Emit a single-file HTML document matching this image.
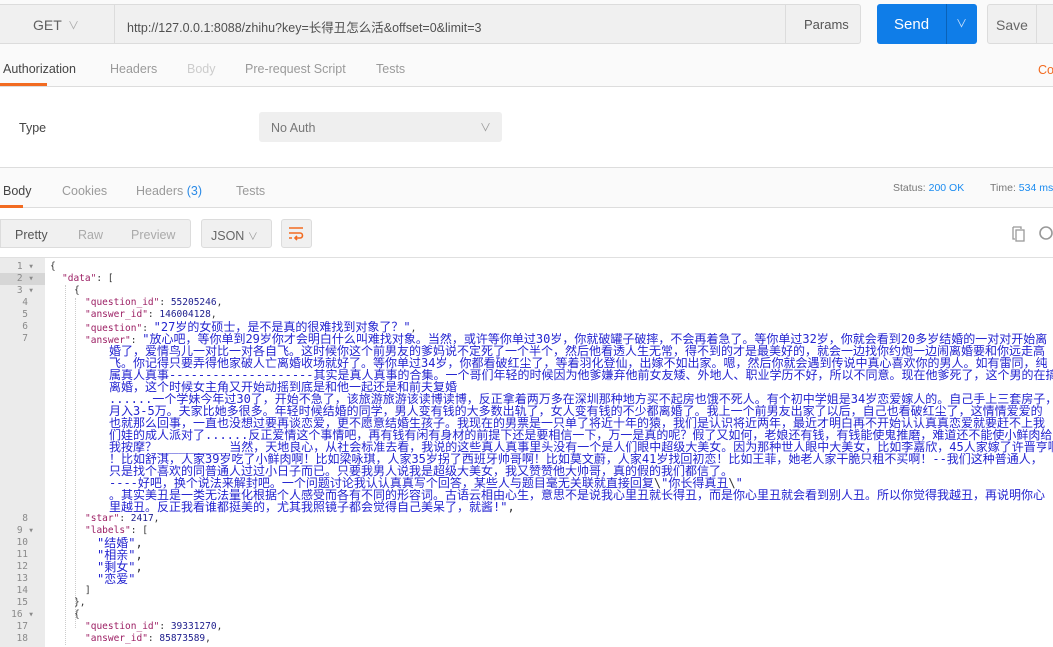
<!DOCTYPE html>
<html><head><meta charset="utf-8"><style>
*{margin:0;padding:0;box-sizing:border-box}
body{width:1053px;height:646px;overflow:hidden;background:#fff;font-family:"Liberation Sans","Noto Sans CJK SC",sans-serif;position:relative;font-size:12px;color:#505050}
.a{position:absolute}
.top{left:0;top:0;width:1053px;height:50px;background:#fafafa}
.box{background:#f0f0f0;border:1px solid #dcdcdc;border-radius:3px}
.tabs{left:0;top:50px;width:1053px;height:37px;background:#fafafa;border-bottom:1px solid #ddd}
.t{position:absolute;font-size:12.5px;color:#9a9a9a}
.code{left:0;top:257px;width:1053px;height:389px;border-top:1px solid #e0e0e0}
.gut{left:0;top:0;width:45px;height:389px;background:#ebebeb}
.ln{position:absolute;width:34px;text-align:right;font:9.5px/12px "DejaVu Sans Mono",monospace;color:#8a8a8a;left:0}
.row{position:absolute;left:50px;height:13px;white-space:nowrap;font:9.5px/12px "DejaVu Sans Mono","Noto Sans CJK SC",monospace;color:#333;width:1003px;overflow:hidden}
.k{color:#9c1f64}.s{color:#2424d0}.n{color:#1c1c8c}
.cj{font-size:12px;line-height:12px;font-family:"DejaVu Sans Mono","Noto Sans CJK SC",monospace}
</style></head><body>
<div class="a top"></div>
<div class="a box" style="left:-3px;top:4px;width:118px;height:40px;border-radius:0"></div>
<div class="a" style="left:33px;top:17px;font-size:14px;color:#606060">GET</div>
<div class="a" style="left:68px;top:17px;font-size:11px;color:#aaa">∨</div>
<div class="a box" style="left:114px;top:4px;width:747px;height:40px;border-radius:0 3px 3px 0"></div>
<div class="a" style="left:785px;top:4px;width:1px;height:40px;background:#dcdcdc"></div>
<div class="a" style="left:127px;top:17px;font-size:12.5px;color:#505050;font-family:'Liberation Sans','Noto Sans CJK SC',sans-serif">http://127.0.0.1:8088/zhihu?key=长得丑怎么活&amp;offset=0&amp;limit=3</div>
<div class="a" style="left:804px;top:17px;font-size:13px;color:#555">Params</div>
<div class="a" style="left:877px;top:4px;width:100px;height:40px;background:#0f7de8;border-radius:3px"></div>
<div class="a" style="left:946px;top:4px;width:1px;height:40px;background:#0a62b8"></div>
<div class="a" style="left:894px;top:16px;font-size:15px;color:#fff">Send</div>
<div class="a" style="left:956px;top:15px;font-size:11px;color:#cfe3fb">∨</div>
<div class="a box" style="left:987px;top:4px;width:80px;height:40px"></div>
<div class="a" style="left:1036px;top:4px;width:1px;height:40px;background:#dcdcdc"></div>
<div class="a" style="left:996px;top:17px;font-size:14px;color:#666">Save</div>
<div class="a tabs"></div>
<div class="t" style="left:3px;top:62px;color:#444">Authorization</div>
<div class="a" style="left:0;top:83px;width:47px;height:3px;background:#f26b21"></div>
<div class="t" style="left:110px;top:62px">Headers</div>
<div class="t" style="left:187px;top:62px;color:#ccc">Body</div>
<div class="t" style="left:245px;top:62px">Pre-request Script</div>
<div class="t" style="left:376px;top:62px">Tests</div>
<div class="t" style="left:1038px;top:63px;color:#f26b21">Co</div>
<div class="t" style="left:19px;top:121px;color:#444">Type</div>
<div class="a" style="left:259px;top:112px;width:243px;height:30px;background:#efefef;border-radius:3px"></div>
<div class="t" style="left:271px;top:121px;color:#777">No Auth</div>
<div class="a" style="left:480px;top:119px;font-size:11px;color:#999">∨</div>
<div class="a" style="left:0;top:167px;width:1053px;height:41px;background:#fafafa;border-top:1px solid #ddd;border-bottom:1px solid #ddd"></div>
<div class="t" style="left:3px;top:184px;color:#444">Body</div>
<div class="a" style="left:0;top:205px;width:23px;height:3px;background:#f26b21"></div>
<div class="t" style="left:62px;top:184px">Cookies</div>
<div class="t" style="left:136px;top:184px">Headers <span style="color:#2a8ae6">(3)</span></div>
<div class="t" style="left:236px;top:184px">Tests</div>
<div class="a" style="left:893px;top:182px;font-size:10.5px;color:#777">Status: <span style="color:#1a8bf0">200 OK</span></div>
<div class="a" style="left:990px;top:182px;font-size:10.5px;color:#777;white-space:nowrap">Time: <span style="color:#1a8bf0">534 ms</span></div>
<div class="a box" style="left:0;top:219px;width:191px;height:29px;border-radius:0 3px 3px 0"></div>
<div class="t" style="left:15px;top:228px;color:#555">Pretty</div>
<div class="t" style="left:78px;top:228px;color:#aaa">Raw</div>
<div class="t" style="left:131px;top:228px;color:#aaa">Preview</div>
<div class="a box" style="left:201px;top:219px;width:71px;height:29px"></div>
<div class="t" style="left:211px;top:228px;color:#666">JSON <span style="font-size:10px;color:#999">∨</span></div>
<div class="a box" style="left:281px;top:219px;width:31px;height:29px"></div>
<svg class="a" style="left:288px;top:226px" width="16" height="16" viewBox="0 0 16 16" fill="none" stroke="#f26b21" stroke-width="1.6"><path d="M1 2h14M1 7h11a2.5 2.5 0 0 1 0 5H7M9 10l-2 2 2 2M1 12h3"/></svg>
<svg class="a" style="left:1010px;top:225px" width="18" height="18" viewBox="0 0 18 18" fill="none" stroke="#999" stroke-width="1.3"><path d="M3 2h8v2M3 2v12h2"/><rect x="6" y="5" width="8" height="11"/></svg>
<svg class="a" style="left:1037px;top:224px" width="16" height="18" viewBox="0 0 16 18" fill="none" stroke="#999" stroke-width="1.6"><circle cx="9" cy="9" r="6"/></svg>
<div class="a code">
<div class="a gut"></div>
<div class="a" style="left:0;top:15px;width:45px;height:12px;background:#d6d6d6"></div>
<div class="a" style="left:65px;top:27px;width:1px;height:360px;border-left:1px dotted #ccc"></div>
<div class="a" style="left:75px;top:40px;width:1px;height:330px;border-left:1px dotted #ccc"></div>
<div class="ln" style="top:3px">1 ▾</div><div class="ln" style="top:15px">2 ▾</div><div class="ln" style="top:27px">3 ▾</div>
<div class="ln" style="top:39px;width:28px">4</div><div class="ln" style="top:51px;width:28px">5</div><div class="ln" style="top:63px;width:28px">6</div><div class="ln" style="top:75px;width:28px">7</div>
<div class="ln" style="top:255px;width:28px">8</div><div class="ln" style="top:267px">9 ▾</div><div class="ln" style="top:279px;width:28px">10</div><div class="ln" style="top:291px;width:28px">11</div><div class="ln" style="top:303px;width:28px">12</div><div class="ln" style="top:315px;width:28px">13</div><div class="ln" style="top:327px;width:28px">14</div><div class="ln" style="top:339px;width:28px">15</div><div class="ln" style="top:351px">16 ▾</div><div class="ln" style="top:363px;width:28px">17</div><div class="ln" style="top:375px;width:28px">18</div>
<div class="row" style="top:3px">{</div>
<div class="row" style="top:15px;left:62px"><span class="k">"data"</span>: [</div>
<div class="row" style="top:27px;left:74px">{</div>
<div class="row" style="top:39px;left:85px"><span class="k">"question_id"</span>: <span class="n">55205246</span>,</div>
<div class="row" style="top:51px;left:85px"><span class="k">"answer_id"</span>: <span class="n">146004128</span>,</div>
<div class="row" style="top:63px;left:85px"><span class="k">"question"</span>: <span class="s cj">"27岁的女硕士，是不是真的很难找到对象了？"</span>,</div>
<div class="row" style="top:75px;left:85px"><span class="k">"answer"</span>: <span class="s cj">"放心吧，等你单到29岁你才会明白什么叫难找对象。当然，或许等你单过30岁，你就破罐子破摔，不会再着急了。等你单过32岁，你就会看到20多岁结婚的一对对开始离</span></div>
<div class="row s cj" style="top:87px;left:109px">婚了，爱情鸟儿一对比一对各自飞。这时候你这个前男友的爹妈说不定死了一个半个，然后他看透人生无常，得不到的才是最美好的，就会一边找你约炮一边闹离婚要和你远走高</div>
<div class="row s cj" style="top:99px;left:109px">飞。你记得只要弄得他家破人亡离婚收场就好了。等你单过34岁，你都看破红尘了，等着羽化登仙，出嫁不如出家。嗯，然后你就会遇到传说中真心喜欢你的男人。如有雷同，纯</div>
<div class="row s cj" style="top:111px;left:109px">属真人真事--------------------其实是真人真事的合集。一个哥们年轻的时候因为他爹嫌弃他前女友矮、外地人、职业学历不好，所以不同意。现在他爹死了，这个男的在搞</div>
<div class="row s cj" style="top:123px;left:109px">离婚，这个时候女主角又开始动摇到底是和他一起还是和前夫复婚</div>
<div class="row s cj" style="top:135px;left:109px">......一个学妹今年过30了，开始不急了，该旅游旅游该读博读博，反正拿着两万多在深圳那种地方买不起房也饿不死人。有个初中学姐是34岁恋爱嫁人的。自己手上三套房子，</div>
<div class="row s cj" style="top:147px;left:109px">月入3-5万。夫家比她多很多。年轻时候结婚的同学，男人变有钱的大多数出轨了，女人变有钱的不少都离婚了。我上一个前男友出家了以后，自己也看破红尘了，这情情爱爱的</div>
<div class="row s cj" style="top:159px;left:109px">也就那么回事，一直也没想过要再谈恋爱，更不愿意结婚生孩子。我现在的男票是一只单了将近十年的猿，我们是认识将近两年，最近才明白再不开始认认真真恋爱就要赶不上我</div>
<div class="row s cj" style="top:171px;left:109px">们娃的成人派对了......反正爱情这个事情吧，再有钱有闲有身材的前提下还是要相信一下，万一是真的呢？假了又如何，老娘还有钱，有钱能使鬼推磨，难道还不能使小鲜肉给</div>
<div class="row s cj" style="top:183px;left:109px">我按摩？__________当然，天地良心，从社会标准去看，我说的这些真人真事里头没有一个是人们眼中超级大美女。因为那种世人眼中大美女，比如李嘉欣，45人家嫁了许晋亨啊</div>
<div class="row s cj" style="top:195px;left:109px">！比如舒淇，人家39岁吃了小鲜肉啊！比如梁咏琪，人家35岁拐了西班牙帅哥啊！比如莫文蔚，人家41岁找回初恋！比如王菲，她老人家干脆只租不买啊！--我们这种普通人，</div>
<div class="row s cj" style="top:207px;left:109px">只是找个喜欢的同普通人过过小日子而已。只要我男人说我是超级大美女，我又赞赞他大帅哥，真的假的我们都信了。</div>
<div class="row s cj" style="top:219px;left:109px">----好吧，换个说法来解封吧。一个问题讨论我认认真真写个回答，某些人与题目毫无关联就直接回复<span style="color:#333">\</span>"你长得真丑<span style="color:#333">\</span>"</div>
<div class="row s cj" style="top:231px;left:109px">。其实美丑是一类无法量化根据个人感受而各有不同的形容词。古语云相由心生，意思不是说我心里丑就长得丑，而是你心里丑就会看到别人丑。所以你觉得我越丑，再说明你心</div>
<div class="row cj" style="top:243px;left:109px"><span class="s">里越丑。反正我看谁都挺美的，尤其我照镜子都会觉得自己美呆了，就酱!"</span>,</div>
<div class="row" style="top:255px;left:85px"><span class="k">"star"</span>: <span class="n">2417</span>,</div>
<div class="row" style="top:267px;left:85px"><span class="k">"labels"</span>: [</div>
<div class="row s cj" style="top:279px;left:97px">"结婚"<span style="color:#333">,</span></div>
<div class="row s cj" style="top:291px;left:97px">"相亲"<span style="color:#333">,</span></div>
<div class="row s cj" style="top:303px;left:97px">"剩女"<span style="color:#333">,</span></div>
<div class="row s cj" style="top:315px;left:97px">"恋爱"</div>
<div class="row" style="top:327px;left:85px">]</div>
<div class="row" style="top:339px;left:74px">},</div>
<div class="row" style="top:351px;left:74px">{</div>
<div class="row" style="top:363px;left:85px"><span class="k">"question_id"</span>: <span class="n">39331270</span>,</div>
<div class="row" style="top:375px;left:85px"><span class="k">"answer_id"</span>: <span class="n">85873589</span>,</div>
</div>
</body></html>
